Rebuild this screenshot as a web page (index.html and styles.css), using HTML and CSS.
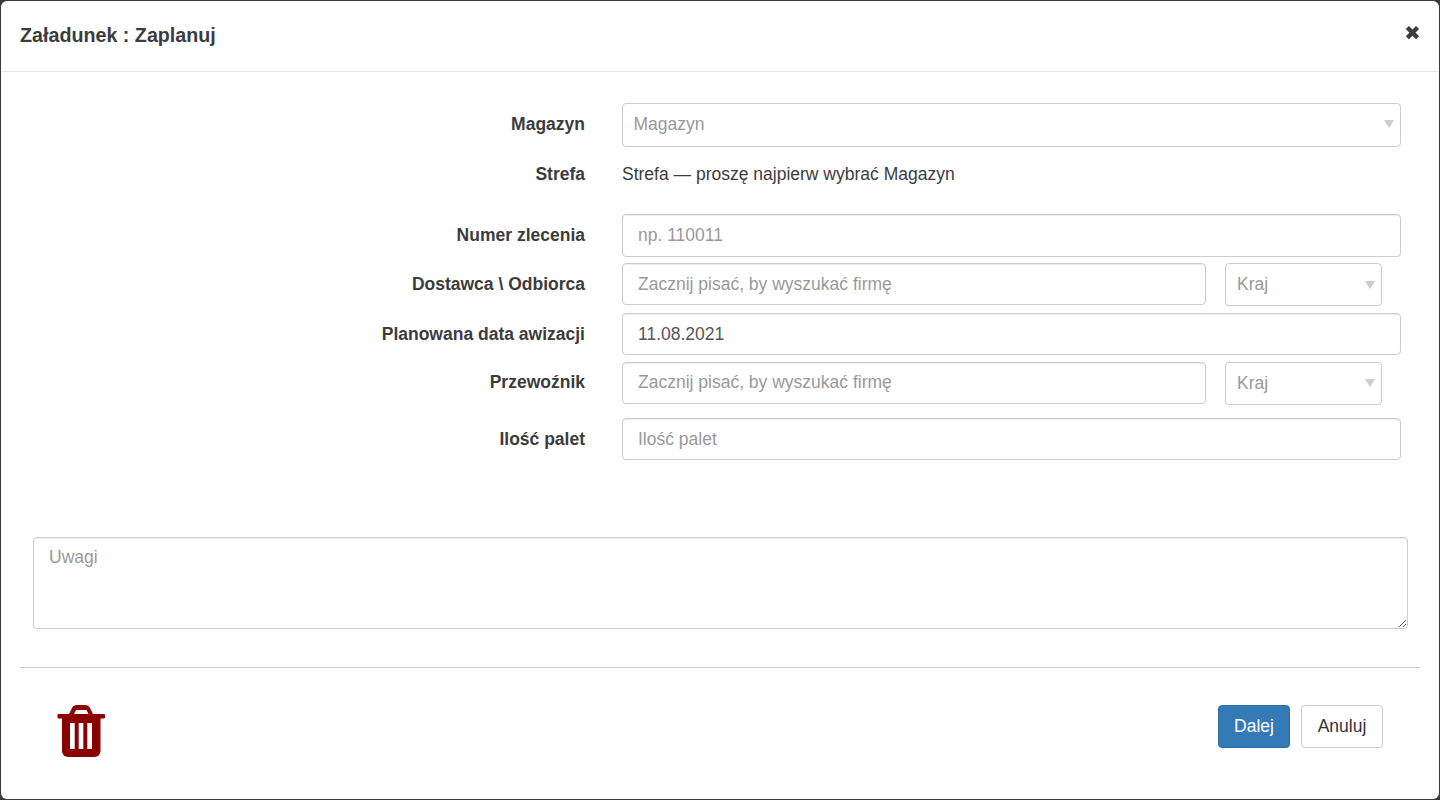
FILE: index.html
```html
<!DOCTYPE html>
<html lang="pl">
<head>
<meta charset="utf-8">
<title>Załadunek : Zaplanuj</title>
<link rel="stylesheet" href="styles.css">
</head>
<body>
<div class="modal">
  <header class="modal-header">
    <h4 class="modal-title">Załadunek : Zaplanuj</h4>
    <button class="close" type="button" aria-label="Zamknij">
      <svg width="15" height="16" viewBox="0 0 15 16"><path d="M2.350 3.550 12.550 13.750M12.550 3.550 2.350 13.750" stroke="#3c3c3c" stroke-width="4.400" fill="none"/></svg>
    </button>
  </header>

  <form class="form">
    <div class="row row-magazyn">
      <label class="label">Magazyn</label>
      <div class="select select-full"><span>Magazyn</span><i class="arrow"></i></div>
    </div>
    <div class="row row-strefa">
      <label class="label">Strefa</label>
      <p class="static">Strefa — proszę najpierw wybrać Magazyn</p>
    </div>
    <div class="row row-numer">
      <label class="label">Numer zlecenia</label>
      <input class="input" type="text" placeholder="np. 110011">
    </div>
    <div class="row row-dostawca">
      <label class="label">Dostawca \ Odbiorca</label>
      <input class="input input-firm" type="text" placeholder="Zacznij pisać, by wyszukać firmę">
      <div class="select select-kraj"><span>Kraj</span><i class="arrow"></i></div>
    </div>
    <div class="row row-data">
      <label class="label">Planowana data awizacji</label>
      <input class="input" type="text" value="11.08.2021">
    </div>
    <div class="row row-przewoznik">
      <label class="label">Przewoźnik</label>
      <input class="input input-firm" type="text" placeholder="Zacznij pisać, by wyszukać firmę">
      <div class="select select-kraj"><span>Kraj</span><i class="arrow"></i></div>
    </div>
    <div class="row row-palety">
      <label class="label">Ilość palet</label>
      <input class="input" type="text" placeholder="Ilość palet">
    </div>
    <textarea class="notes" placeholder="Uwagi"></textarea>
  </form>

  <footer class="modal-footer">
    <button class="trash" type="button" aria-label="Usuń">
      <svg width="48" height="52" viewBox="0 0 48 52"><path d="M12 9 15 3Q16.500 0 20 0H28Q31.500 0 33 3L36 9H31.500L29.500 5H19L17 9Z" fill="#8b0000"/><rect x="0.500" y="9" width="47.500" height="4.500" rx="1" fill="#8b0000"/><path d="M5 13H43.500V46a6 6 0 0 1-6 6H11a6 6 0 0 1-6-6z" fill="#8b0000"/><path d="M13 18h4.700v26H13zM21.700 18h4.600v26h-4.600zM30.300 18H35v26h-4.700z" fill="#fff"/></svg>
    </button>
    <div class="actions">
      <button class="btn btn-primary" type="button">Dalej</button>
      <button class="btn btn-default" type="button">Anuluj</button>
    </div>
  </footer>
</div>
</body>
</html>
```
FILE: styles.css
```css
* { box-sizing: border-box; }
html, body { margin: 0; height: 100%; }
body {
  background: #3a3a3a;
  font-family: "Liberation Sans", Arial, sans-serif;
  font-size: 17.5px;
  color: #333;
  overflow: hidden;
}
.modal {
  margin: 1px;
  height: 798px;
  background: #fff;
  border-radius: 6px;
  overflow: hidden;
}
.modal-header {
  display: flex;
  justify-content: space-between;
  height: 71px;
  padding: 0 19px;
  border-bottom: 1px solid #e5e5e5;
}
.modal-title {
  margin: 24px 0 0;
  font-size: 19.7px;
  line-height: 20px;
  font-weight: 700;
  color: #3c3c3c;
}
.close {
  margin: 23px 0 0;
  padding: 0;
  width: 15px;
  height: 16px;
  border: 0;
  background: none;
  display: flex;
}
.form {
  display: flex;
  flex-direction: column;
  padding: 31px 31px 0 32px;
}
.row {
  display: flex;
  align-items: flex-start;
  margin-right: 7px;
}
.label {
  width: 552px;
  flex: none;
  text-align: right;
  font-weight: 700;
  line-height: 22px;
  margin-right: 37px;
  padding-top: 10px;
  color: #3c3c3c;
}
.input, .select {
  height: 43px;
  border: 1px solid #ccc;
  border-radius: 4px;
  background: #fff;
  font: inherit;
  color: #555;
}
.input {
  flex: 1;
  min-width: 0;
  padding: 0 15px;
  box-shadow: inset 0 1px 1px rgba(0, 0, 0, .075);
  outline: none;
}
.input::placeholder, .notes::placeholder { color: #999; opacity: 1; }
.select {
  display: flex;
  align-items: center;
  padding: 0 11px;
  color: #999;
}
.select-full {
  flex: 1;
  height: 44px;
  justify-content: space-between;
  padding: 0 6px 2px 10.500px;
}
.arrow {
  width: 0;
  height: 0;
  border: 5px solid transparent;
  border-top: 8px solid #ccc;
  border-bottom: 0;
}
.select-kraj { width: 157px; flex: none; margin: 0 18px 0 19px; justify-content: space-between; padding-right: 6px; }
.input-firm { flex: none; width: 584px; height: 42px; }
.row-strefa { margin-top: 4px; }
.row-strefa .label { padding-top: 12px; }
.static { margin: 0; padding-top: 12px; line-height: 22px; color: #3c3c3c; }
.row-numer { margin-top: 29px; }
.row-dostawca { margin-top: 6px; }
.row-data { margin-top: 7px; }
.row-data .input { height: 42px; }
.row-przewoznik { margin-top: 7px; }
.row-przewoznik .label { padding-top: 9px; }
.row-przewoznik .input { padding-bottom: 2px; }
.row-przewoznik .select { padding-bottom: 1px; }
.row-palety { margin-top: 13px; }
.row-palety .input { height: 42px; }
.notes {
  display: block;
  width: 1375px;
  height: 92px;
  margin-top: 77px;
  padding: 8px 15px;
  border: 1px solid #ccc;
  border-radius: 4px;
  font: inherit;
  line-height: 22px;
  box-shadow: inset 0 1px 1px rgba(0, 0, 0, .075);
  outline: none;
}
.modal-footer {
  display: flex;
  justify-content: space-between;
  margin: 38px 19px 0;
  padding: 37px 37px 0 37px;
  border-top: 1px solid #ccc;
}
.trash { padding: 0; margin: 0; border: 0; background: none; display: flex; }
.actions { display: flex; gap: 11px; }
.btn {
  height: 43px;
  padding: 0 15px;
  border: 1px solid #ccc;
  border-radius: 4px;
  font: inherit;
  background: #fff;
  color: #333;
}
.btn-primary { width: 72px; background: #337ab7; border-color: #2e6da4; color: #fff; }
.btn-default { width: 82px; }
```
